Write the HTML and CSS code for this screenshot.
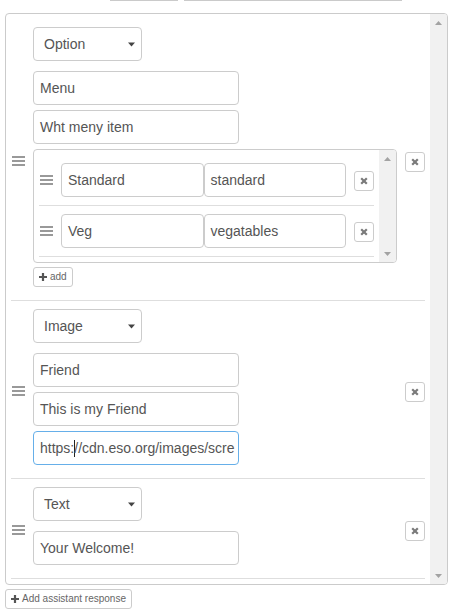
FILE: index.html
```html
<!DOCTYPE html>
<html>
<head>
<meta charset="utf-8">
<title>Assistant responses</title>
<link rel="stylesheet" href="styles.css">
</head>
<body>
<div class="stubs"><div class="stub stub-a"></div><div class="stub stub-b"></div></div>

<div class="panel">
  <div class="list">

    <div class="item">
      <div class="handle"><svg width="13" height="10" viewBox="0 0 13 10"><rect y="0" width="13" height="2"/><rect y="4" width="13" height="2"/><rect y="8" width="13" height="2"/></svg></div>
      <div class="item-body">
        <div class="select"><span>Option</span><svg width="7" height="5" viewBox="0 0 7 5"><polygon points="0,0.5 7,0.5 3.5,4.5"/></svg></div>
        <div class="field">Menu</div>
        <div class="field">Wht meny item</div>
        <div class="subpanel">
          <div class="sublist">
            <div class="subitem">
              <div class="handle"><svg width="13" height="10" viewBox="0 0 13 10"><rect y="0" width="13" height="2"/><rect y="4" width="13" height="2"/><rect y="8" width="13" height="2"/></svg></div>
              <div class="field half">Standard</div>
              <div class="field half">standard</div>
              <button class="del del-sub"><svg width="8" height="8" viewBox="0 0 8 8"><path d="M1.2 1.2L6.8 6.8M6.8 1.2L1.2 6.8"/></svg></button>
            </div>
            <div class="subitem">
              <div class="handle"><svg width="13" height="10" viewBox="0 0 13 10"><rect y="0" width="13" height="2"/><rect y="4" width="13" height="2"/><rect y="8" width="13" height="2"/></svg></div>
              <div class="field half">Veg</div>
              <div class="field half">vegatables</div>
              <button class="del del-sub"><svg width="8" height="8" viewBox="0 0 8 8"><path d="M1.2 1.2L6.8 6.8M6.8 1.2L1.2 6.8"/></svg></button>
            </div>
          </div>
          <div class="scrollbar">
            <div class="sb-btn"><svg width="7" height="4" viewBox="0 0 7 4"><polygon points="0,4 7,4 3.5,0"/></svg></div>
            <div class="sb-btn"><svg width="7" height="4" viewBox="0 0 7 4"><polygon points="0,0 7,0 3.5,4"/></svg></div>
          </div>
        </div>
        <button class="btn-small btn-add"><svg width="8" height="8" viewBox="0 0 8 8"><path d="M4 0V8M0 4H8"/></svg><span>add</span></button>
      </div>
      <button class="del del-item"><svg width="8" height="8" viewBox="0 0 8 8"><path d="M1.2 1.2L6.8 6.8M6.8 1.2L1.2 6.8"/></svg></button>
    </div>

    <div class="item">
      <div class="handle"><svg width="13" height="10" viewBox="0 0 13 10"><rect y="0" width="13" height="2"/><rect y="4" width="13" height="2"/><rect y="8" width="13" height="2"/></svg></div>
      <div class="item-body">
        <div class="select"><span>Image</span><svg width="7" height="5" viewBox="0 0 7 5"><polygon points="0,0.5 7,0.5 3.5,4.5"/></svg></div>
        <div class="field">Friend</div>
        <div class="field">This is my Friend</div>
        <div class="field focus"><span class="val">https:<span class="caret"></span>//cdn.eso.org/images/scre</span></div>
      </div>
      <button class="del del-item"><svg width="8" height="8" viewBox="0 0 8 8"><path d="M1.2 1.2L6.8 6.8M6.8 1.2L1.2 6.8"/></svg></button>
    </div>

    <div class="item">
      <div class="handle"><svg width="13" height="10" viewBox="0 0 13 10"><rect y="0" width="13" height="2"/><rect y="4" width="13" height="2"/><rect y="8" width="13" height="2"/></svg></div>
      <div class="item-body">
        <div class="select"><span>Text</span><svg width="7" height="5" viewBox="0 0 7 5"><polygon points="0,0.5 7,0.5 3.5,4.5"/></svg></div>
        <div class="field">Your Welcome!</div>
      </div>
      <button class="del del-item"><svg width="8" height="8" viewBox="0 0 8 8"><path d="M1.2 1.2L6.8 6.8M6.8 1.2L1.2 6.8"/></svg></button>
    </div>

  </div>
  <div class="scrollbar">
    <div class="sb-btn"><svg width="7" height="4" viewBox="0 0 7 4"><polygon points="0,4 7,4 3.5,0"/></svg></div>
    <div class="sb-btn"><svg width="7" height="4" viewBox="0 0 7 4"><polygon points="0,0 7,0 3.5,4"/></svg></div>
  </div>
</div>

<button class="btn-small btn-response"><svg width="8" height="8" viewBox="0 0 8 8"><path d="M4 0V8M0 4H8"/></svg><span>Add assistant response</span></button>
</body>
</html>
```

FILE: styles.css
```css
* {
  box-sizing: border-box;
}

body {
  margin: 0;
  background: #fff;
  font-family: "Liberation Sans", Arial, sans-serif;
  font-size: 14px;
  color: #555;
}

.stubs {
  display: flex;
  gap: 6px;
  padding-left: 110px;
  height: 1px;
}

.stub {
  height: 1px;
  background: #cacaca;
}

.stub-a { width: 68px; }
.stub-b { width: 218px; }

.panel {
  margin: 12px 0 0 5px;
  width: 443px;
  border: 1px solid #cbcbcb;
  border-radius: 4px;
  display: flex;
  overflow: hidden;
}

.list {
  flex: 1;
  min-width: 0;
  padding: 5px;
}

.scrollbar {
  width: 17px;
  flex-shrink: 0;
  background: #f1f1f1;
  display: flex;
  flex-direction: column;
  justify-content: space-between;
}

.sb-btn {
  height: 17px;
  display: flex;
  align-items: center;
  justify-content: center;
}

.sb-btn svg {
  display: block;
  fill: #a3a3a3;
}

.item {
  display: flex;
  align-items: center;
  border-bottom: 1px solid #dedede;
}

.handle {
  width: 22px;
  flex-shrink: 0;
  padding-left: 1px;
  margin-top: 2px;
  display: flex;
}

.handle svg {
  display: block;
  fill: #999;
}

.item-body {
  flex: 1;
  min-width: 0;
  padding: 8px 0 13px;
  display: flex;
  flex-direction: column;
  align-items: flex-start;
  gap: 5px;
}

.select {
  width: 109px;
  height: 34px;
  border: 1px solid #ccc;
  border-radius: 4px;
  padding: 0 6px 0 10px;
  margin-bottom: 5px;
  display: flex;
  align-items: center;
  justify-content: space-between;
  line-height: 20px;
  background: #fff;
}

.select svg {
  display: block;
  fill: #444;
}

.field {
  width: 206px;
  height: 34px;
  border: 1px solid #ccc;
  border-radius: 4px;
  padding: 6px;
  line-height: 20px;
  white-space: nowrap;
  overflow: hidden;
  background: #fff;
}

.field.focus {
  border-color: #66afe9;
}

.val {
  display: block;
  overflow: hidden;
  margin-right: -4px;
}

.caret {
  display: inline-block;
  width: 1px;
  height: 17px;
  margin-right: -1px;
  background: #222;
  vertical-align: -4px;
}

.subpanel {
  width: 100%;
  border: 1px solid #ccc;
  border-radius: 4px;
  display: flex;
  overflow: hidden;
}

.sublist {
  flex: 1;
  min-width: 0;
  padding: 5px;
}

.subitem {
  display: flex;
  align-items: center;
  padding: 8px 0;
  border-bottom: 1px solid #dedede;
}

.subitem .handle {
  margin-top: 0;
}

.subitem .field.half {
  width: auto;
  flex: 1;
  min-width: 0;
}

.del {
  width: 20px;
  height: 20px;
  flex-shrink: 0;
  margin: 0 0 0 8px;
  padding: 0;
  border: 1px solid #ccc;
  border-radius: 3px;
  background: #fff;
  display: flex;
  align-items: center;
  justify-content: center;
}

.del svg {
  display: block;
  stroke: #7a7a7a;
  stroke-width: 2.2;
  fill: none;
}

.del-item {
  margin-top: 4px;
}

.del-sub {
  margin-top: 2px;
}

.btn-small {
  height: 20px;
  padding: 0 5px;
  border: 1px solid #ccc;
  border-radius: 3px;
  background: #fff;
  display: flex;
  align-items: center;
  gap: 3px;
  font-family: "Liberation Sans", Arial, sans-serif;
  font-size: 10px;
  line-height: 18px;
  color: #666;
}

.btn-small svg {
  display: block;
  stroke: #555;
  stroke-width: 2.2;
  fill: none;
}

.btn-add {
  margin-top: -1px;
}

.btn-response {
  margin: 4px 0 0 5px;
}
```
